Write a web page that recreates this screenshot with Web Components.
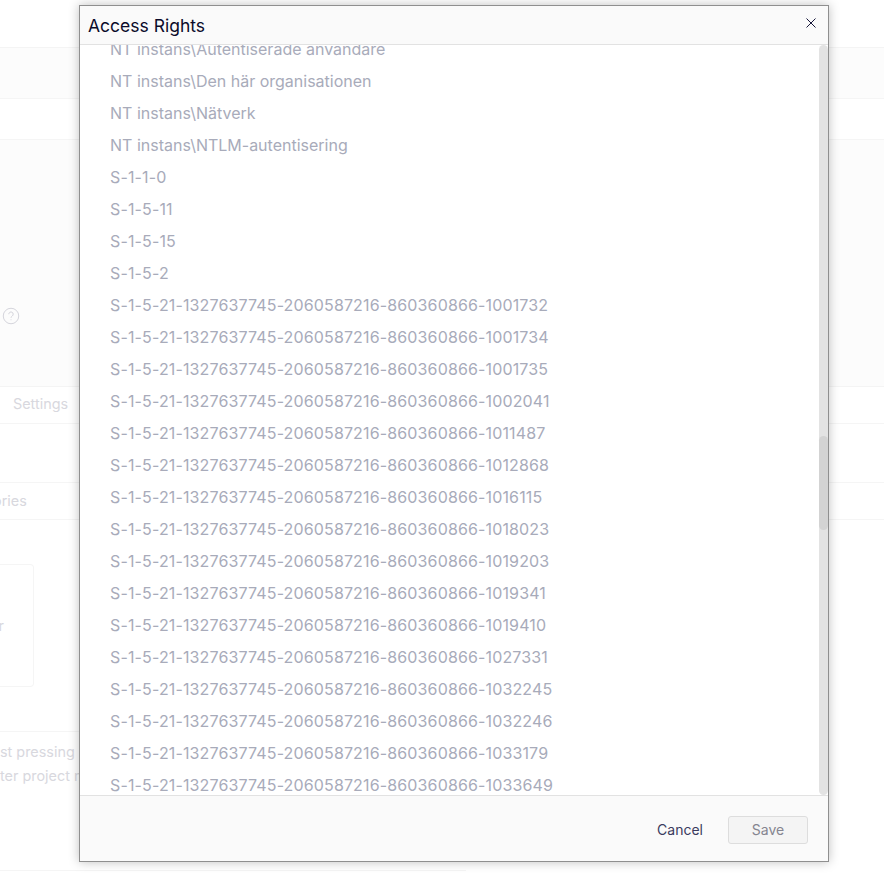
<!DOCTYPE html>
<html><head><meta charset="utf-8">
<style>
html,body{margin:0;padding:0;height:881px;overflow:hidden;background:#fff;font-family:Inter,"Liberation Sans",sans-serif}
</style></head><body>
<page-backdrop></page-backdrop>
<access-dialog title-text="Access Rights"></access-dialog>
<script>
class PageBackdrop extends HTMLElement{
  constructor(){super();this.attachShadow({mode:'open'}).innerHTML=`<style>
  :host{display:block;width:884px;height:881px;overflow:hidden;color:#d8d8de;font:14.4px/24px Inter,"Liberation Sans",sans-serif}
  .top{height:47px}
  .hero{height:338px;background:#fcfcfc;border-top:1px solid #f4f4f4;border-bottom:1px solid #f4f4f4;display:flex;flex-direction:column}
  .hero .a{height:50px}
  .hero .b{height:40px;background:#fff;border-top:1px solid #f5f5f5;border-bottom:1px solid #f5f5f5}
  .hero .c{flex:1;display:flex;align-items:flex-start;padding:167px 0 0 2px}
  .tabs{height:36px;border-bottom:1px solid #f5f5f5;display:flex;align-items:center;padding-left:13px}
  .tabs span{position:relative;top:-1px}
  .gap1{height:58px}
  .sub{height:36px;border-top:1px solid #f5f5f5;border-bottom:1px solid #f5f5f5;display:flex;align-items:center}
  .sub span{margin-left:-7px}
  .gap2{height:44px}
  .card{width:34px;height:123px;box-sizing:border-box;border:1px solid #f5f5f5;border-left:0;border-radius:0 4px 4px 0;display:flex;align-items:center;justify-content:flex-end;padding-right:29px}
  .gap3{height:44px}
  .note{height:140px;width:466px;border-top:1px solid #f5f5f5;border-bottom:1px solid #f5f5f5;padding-top:8px;box-sizing:border-box}
  </style>
  <div class="top"></div>
  <div class="hero"><div class="a"></div><div class="b"></div><div class="c">
    <svg width="18" height="18" viewBox="0 0 18 18" fill="none" stroke="#d5d5dc"><circle cx="9" cy="9" r="7.75"/><path d="M6.8 7.2a2.2 2.2 0 1 1 3.4 1.8c-.8.5-1.2 1-1.2 1.8M9 12.4v.8"/></svg>
  </div></div>
  <div class="tabs"><span>Settings</span></div>
  <div class="gap1"></div>
  <div class="sub"><span>ories</span></div>
  <div class="gap2"></div>
  <div class="card">r</div>
  <div class="gap3"></div>
  <div class="note"><div>st pressing</div><div>ter project m</div></div>`;}
}
customElements.define('page-backdrop',PageBackdrop);

class RightsRow extends HTMLElement{
  constructor(){super();this.attachShadow({mode:'open'}).innerHTML=`<style>
  :host{display:block;height:32px;line-height:32px;padding-left:30px;font-size:16px;color:#a8abba;white-space:nowrap}
  :host([sid]){letter-spacing:.14px}
  </style><slot></slot>`;}
}
customElements.define('rights-row',RightsRow);

class ScrollRail extends HTMLElement{
  constructor(){super();this.attachShadow({mode:'open'}).innerHTML=`<style>
  :host{display:block;width:9px;background:#e3e3e3;border-radius:5px;flex:none;padding-top:391px;box-sizing:border-box}
  .thumb{height:94px;background:#d3d3d3;border-radius:5px}
  </style><div class="thumb"></div>`;}
}
customElements.define('scroll-rail',ScrollRail);

class AccessDialog extends HTMLElement{
  constructor(){super();
    const pre='S-1-5-21-1327637745-2060587216-860360866-';
    const names=['NT instans\\Autentiserade användare','NT instans\\Den här organisationen','NT instans\\Nätverk','NT instans\\NTLM-autentisering','S-1-1-0','S-1-5-11','S-1-5-15','S-1-5-2',
      ...['1001732','1001734','1001735','1002041','1011487','1012868','1016115','1018023','1019203','1019341','1019410','1027331','1032245','1032246','1033179','1033649'].map(s=>pre+s)];
    this.attachShadow({mode:'open'}).innerHTML=`<style>
    :host{position:absolute;left:79px;top:5px;width:750px;height:857px;box-sizing:border-box;border:1px solid #8f8f8f;background:#fff;display:flex;flex-direction:column;box-shadow:0 0 10px rgba(0,0,0,.25);font-family:Inter,"Liberation Sans",sans-serif}
    header{height:38px;flex:none;background:#fafafa;border-bottom:1px solid #e2e2e2;display:flex;align-items:center;justify-content:space-between;padding:0 12px 0 8px}
    h1{margin:0;font-size:17.5px;font-weight:400;color:#0b0b2a;line-height:40px;height:38px}
    svg{display:block;position:relative;top:-2px}
    .body{flex:1;min-height:0;display:flex;overflow:hidden}
    .list{flex:1;overflow:hidden;min-width:0}
    .inner{margin-top:-12px}
    footer{height:66px;flex:none;box-sizing:border-box;background:#fafafa;border-top:1px solid #e2e2e2;display:flex;align-items:center;justify-content:flex-end;padding:3px 20px 0 0;gap:25px}
    .cancel{font-size:14px;color:#3b3b5e;padding-bottom:2px}
    .save{width:80px;height:28px;box-sizing:border-box;border:1px solid #dddddd;border-radius:3px;background:#f4f4f4;color:#858590;font-size:14px;display:flex;align-items:center;justify-content:center;padding-bottom:1px}
    </style>
    <header><h1>${this.getAttribute('title-text')}</h1>
      <svg width="10" height="10" viewBox="0 0 10 10" fill="none" stroke="#17173a" stroke-width="1"><path d="M.5.5l9 9M9.5.5l-9 9"/></svg></header>
    <div class="body"><div class="list"><div class="inner">${names.map(n=>`<rights-row${n.startsWith('S-')?' sid':''}>${n}</rights-row>`).join('')}</div></div><scroll-rail></scroll-rail></div>
    <footer><span class="cancel">Cancel</span><span class="save">Save</span></footer>`;}
}
customElements.define('access-dialog',AccessDialog);
</script>
</body></html>
